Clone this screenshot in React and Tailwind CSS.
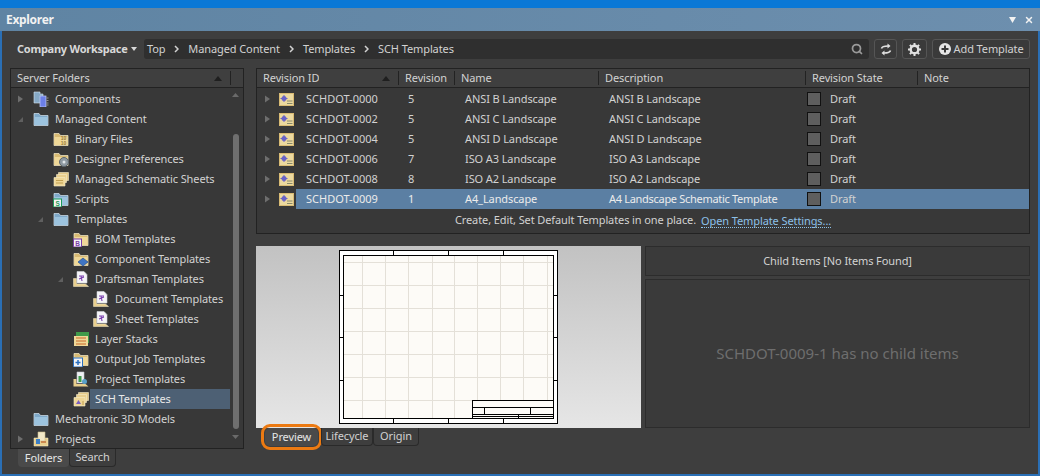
import { Search, X } from 'lucide-react'

const Folder = ({ tone = 'yellow', children }) => {
  const back = tone === 'blue' ? '#7fa9c9' : '#d9bb74'
  const front = tone === 'blue' ? '#9cc3de' : '#efd898'
  const edge = tone === 'blue' ? '#d5e4ef' : '#f7eccb'
  return (
    <svg width="16" height="16" viewBox="0 0 16 16" className="shrink-0">
      <path d="M1 2.5h5l1.5 2H15v10H1z" fill={back} stroke={edge} strokeWidth="0.7" />
      <path d="M1.5 6h13v8h-13z" fill={front} />
      {children}
    </svg>
  )
}

const Badge = ({ color, text }) => (
  <g>
    <rect x="0.5" y="8" width="8" height="8" fill="#f4f4f4" stroke={color} strokeWidth="1" />
    <text x="4.5" y="14.7" fontSize="6.5" fontWeight="700" textAnchor="middle" fill={color} fontFamily="Liberation Sans">{text}</text>
  </g>
)

const Doc = () => (
  <g>
    <path d="M4 0.5h7l3 3V12H4z" fill="#f5f5f8" stroke="#cfd0d8" strokeWidth="0.6" />
    <path d="M6 5h5M8 5l1 5M6 8l5-2" stroke="#7a3fb0" strokeWidth="1.1" fill="none" />
  </g>
)

const Stack = () => (
  <g>
    <path d="M5.5 1.5h10v8h-10z" fill="#e5c987" stroke="#f7eccb" strokeWidth="0.6" />
    <path d="M3.5 3.5h10v8h-10z" fill="#e9cf8e" stroke="#f7eccb" strokeWidth="0.6" />
  </g>
)

const icons = {
  components: (
    <svg width="16" height="16" viewBox="0 0 16 16" className="shrink-0">
      <path d="M1 1h6v2h3v9H1z" fill="#86a9c6" stroke="#d5e4ef" strokeWidth="0.6" />
      <rect x="7" y="5" width="6" height="11" fill="#6c7fe8" stroke="#c4ccf5" strokeWidth="0.7" />
      <path d="M13.5 7h2M13.5 9.5h2M13.5 12h2M13.5 14h2" stroke="#aaa" strokeWidth="0.8" />
    </svg>
  ),
  blue: <Folder tone="blue" />,
  binary: (
    <Folder>
      <text x="10.5" y="9" fontSize="5" fontWeight="700" textAnchor="middle" fill="#9a7a36" fontFamily="Liberation Sans">10</text>
      <text x="10.5" y="14" fontSize="5" fontWeight="700" textAnchor="middle" fill="#9a7a36" fontFamily="Liberation Sans">10</text>
    </Folder>
  ),
  prefs: (
    <Folder>
      <circle cx="11" cy="11" r="4.5" fill="#8f9aa3" stroke="#5c656c" strokeWidth="1" />
      <circle cx="11" cy="11" r="1.5" fill="#dfe4e8" />
    </Folder>
  ),
  sheets: (
    <svg width="16" height="16" viewBox="0 0 16 16" className="shrink-0">
      <Stack />
      <path d="M1 6.500h11v8.500H1z" fill="#eed696" stroke="#f7eccb" strokeWidth="0.6" />
      <path d="M3 9.500h7M3 12h7" stroke="#b5923f" strokeWidth="0.8" />
    </svg>
  ),
  scripts: (
    <Folder tone="blue">
      <Badge color="#1d9a5b" text="S" />
    </Folder>
  ),
  bom: (
    <Folder>
      <Badge color="#7b3fa8" text="B" />
    </Folder>
  ),
  comp: (
    <Folder>
      <path d="M10 7l5 4-5 4-5-4z" fill="#3f75c4" stroke="#26508f" strokeWidth="0.7" />
    </Folder>
  ),
  draft: (
    <svg width="16" height="16" viewBox="0 0 16 16" className="shrink-0">
      <path d="M0.500 7.500h3v5.500h9l3 2.500H0.500z" fill="#e9cf8e" stroke="#f7eccb" strokeWidth="0.5" />
      <Doc />
    </svg>
  ),
  layers: (
    <svg width="16" height="16" viewBox="0 0 16 16" className="shrink-0">
      <rect x="3" y="1" width="13" height="11" fill="#3f9a4a" />
      <path d="M1 5h14v10H1z" fill="#efd898" />
      <path d="M3 7h10M3 10h10M3 13h10" stroke="#c8682a" strokeWidth="1.2" />
    </svg>
  ),
  output: (
    <Folder>
      <rect x="0.5" y="7" width="9" height="9" fill="#f4f4f4" stroke="#2a6fc0" strokeWidth="1" />
      <path d="M2.5 11.5h5M5 9v5" stroke="#2a6fc0" strokeWidth="1.5" />
    </Folder>
  ),
  project: (
    <svg width="16" height="16" viewBox="0 0 16 16" className="shrink-0">
      <path d="M0.500 8h3v5h9l3 2.500H0.500z" fill="#e9cf8e" />
      <path d="M4 1h7v11H4z" fill="#eef0f4" stroke="#c4c6cc" strokeWidth="0.6" />
      <rect x="5.5" y="5" width="3" height="6" fill="#3f9a4a" />
      <circle cx="11.5" cy="10.5" r="2.5" fill="#5aa0c8" />
    </svg>
  ),
  sch: (
    <svg width="16" height="16" viewBox="0 0 16 16" className="shrink-0">
      <Stack />
      <path d="M1 6.500h11v8.500H1z" fill="#eed696" stroke="#f7eccb" strokeWidth="0.6" />
      <path d="M3 13l2.500-4 2.500 4z" fill="#7a5fc0" />
      <path d="M9 11h2M9 13h2" stroke="#b5923f" strokeWidth="0.8" />
    </svg>
  ),
  projects: (
    <svg width="16" height="16" viewBox="0 0 16 16" className="shrink-0">
      <path d="M1 7h14v8H1z" fill="#e9cf8e" stroke="#f7eccb" strokeWidth="0.5" />
      <path d="M5 1h7v9H5z" fill="#f2e8c8" stroke="#c9b98a" strokeWidth="0.6" />
      <path d="M3 8h4v5H3z" fill="#3e7fc4" />
      <path d="M8 11h5" stroke="#c2703a" strokeWidth="1.5" />
    </svg>
  )
}

const Arrow = ({ open }) =>
  open ? (
    <svg width="7" height="7" viewBox="0 0 7 7" className="shrink-0"><path d="M6 1v5H1z" fill="#5f5f5f" /></svg>
  ) : (
    <svg width="7" height="8" viewBox="0 0 7 8" className="shrink-0"><path d="M1 0.5l5 3.5-5 3.5z" fill="#6e6e6e" /></svg>
  )

const Chevron = () => (
  <svg width="5" height="8" viewBox="0 0 5 8" className="shrink-0"><path d="M1 1l3 3-3 3" fill="none" stroke="#d2d2d2" strokeWidth="1.5" /></svg>
)

const tree = [
  { label: 'Components', icon: 'components', level: 'pl-[22px]', arrow: 'closed' },
  { label: 'Managed Content', icon: 'blue', level: 'pl-[22px]', arrow: 'open' },
  { label: 'Binary Files', icon: 'binary', level: 'pl-[42px]' },
  { label: 'Designer Preferences', icon: 'prefs', level: 'pl-[42px]' },
  { label: 'Managed Schematic Sheets', icon: 'sheets', level: 'pl-[42px]' },
  { label: 'Scripts', icon: 'scripts', level: 'pl-[42px]' },
  { label: 'Templates', icon: 'blue', level: 'pl-[42px]', arrow: 'open' },
  { label: 'BOM Templates', icon: 'bom', level: 'pl-[62px]' },
  { label: 'Component Templates', icon: 'comp', level: 'pl-[62px]' },
  { label: 'Draftsman Templates', icon: 'draft', level: 'pl-[62px]', arrow: 'open' },
  { label: 'Document Templates', icon: 'draft', level: 'pl-[82px]' },
  { label: 'Sheet Templates', icon: 'draft', level: 'pl-[82px]' },
  { label: 'Layer Stacks', icon: 'layers', level: 'pl-[62px]' },
  { label: 'Output Job Templates', icon: 'output', level: 'pl-[62px]' },
  { label: 'Project Templates', icon: 'project', level: 'pl-[62px]' },
  { label: 'SCH Templates', icon: 'sch', level: 'pl-[62px]', selected: true },
  { label: 'Mechatronic 3D Models', icon: 'blue', level: 'pl-[22px]' },
  { label: 'Projects', icon: 'projects', level: 'pl-[22px]', arrow: 'closed' }
]

const rows = [
  ['SCHDOT-0000', '5', 'ANSI B Landscape', 'ANSI B Landscape'],
  ['SCHDOT-0002', '5', 'ANSI C Landscape', 'ANSI C Landscape'],
  ['SCHDOT-0004', '5', 'ANSI D Landscape', 'ANSI D Landscape'],
  ['SCHDOT-0006', '7', 'ISO A3 Landscape', 'ISO A3 Landscape'],
  ['SCHDOT-0008', '8', 'ISO A2 Landscape', 'ISO A2 Landscape'],
  ['SCHDOT-0009', '1', 'A4_Landscape', 'A4 Landscape Schematic Template']
]

const TemplateIcon = () => (
  <svg width="15" height="13" viewBox="0 0 15 13" className="shrink-0">
    <rect x="0.5" y="0.5" width="14" height="12" fill="#ecd9a0" stroke="#d9bb74" />
    <circle cx="5" cy="5.500" r="2.500" fill="#6a63c8" />
    <path d="M5 2v7M1.500 5.500h7" stroke="#6a63c8" strokeWidth="1" />
    <path d="M8 8h5.500M8 10.500h5.500" stroke="#8a8a6a" strokeWidth="1" />
  </svg>
)

const Sep = () => <span className="w-px h-[14px] bg-[#222222] shrink-0" />

const Head = ({ label, sort, className = '' }) => (
  <div className={'flex items-center justify-between ' + className}>
    <span className="pl-[6px] truncate">{label}</span>
    <span className="flex items-center gap-[8px]">
      {sort && <svg width="8" height="5" viewBox="0 0 8 5"><path d="M4 0l4 5H0z" fill="#1f1f1f" /></svg>}
      <Sep />
    </span>
  </div>
)

const verticals = [362, 385, 408, 432, 454, 477, 500, 523, 547]
const horizontals = [262, 285, 308, 331, 354, 377, 400]

const SheetDrawing = () => (
  <svg width="220" height="175" viewBox="339 250 220 175" className="ml-[83px] mt-[4px]" shapeRendering="crispEdges">
    <rect x="339.5" y="250.5" width="218" height="173" fill="#ffffff" stroke="#000" />
    <rect x="343.5" y="255.5" width="210" height="163" fill="#fdfbf7" stroke="#000" />
    {verticals.map(x => <path key={x} d={'M' + x + ' 256V418'} stroke="#e4e0d8" />)}
    {horizontals.map(y => <path key={y} d={'M344 ' + y + 'H553'} stroke="#e4e0d8" />)}
    <path d="M393.5 250v5M448.5 250v5M503.5 250v5M393.5 419v4M448.5 419v4M503.5 419v4" stroke="#000" />
    <path d="M339 295.5h4M339 337.5h4M339 380.5h4M554 295.5h4M554 337.5h4M554 380.5h4" stroke="#000" />
    <rect x="472.5" y="400.5" width="81" height="18" fill="#fdfbf7" stroke="#000" />
    <path d="M472 407.5h81M472 414.5h81M472 416.5h81M484.5 407v7M530.5 407v7M518.5 414v4" stroke="#000" />
  </svg>
)

function App() {
  return (
    <div className="w-[1040px] h-[476px] flex flex-col overflow-hidden bg-[#2a6fb5] font-['Noto_Sans',sans-serif] text-[11px] tracking-[-0.1px] text-[#d2d2d2]">
      <div className="h-[8px] bg-[#0a78d6] shrink-0" />
      <div className="h-[23px] shrink-0 flex items-center justify-between pl-[6px] pr-[6px] bg-gradient-to-r from-[#5f84a3] to-[#6d8fae]">
        <span className="font-bold text-[12px] tracking-[-0.3px] text-[#f2f2f2]">Explorer</span>
        <div className="flex items-center gap-[8px]">
          <svg width="7" height="6" viewBox="0 0 7 6"><path d="M0 0h7L3.5 6z" fill="#f2f2f2" /></svg>
          <X size={10} strokeWidth={3.5} className="text-[#f2f2f2]" />
        </div>
      </div>

      <div className="flex-1 min-h-0 ml-[2px] mr-[2px] mb-[2px] bg-[#3e3e3e] flex flex-col">
        {/* toolbar */}
        <div className="h-[20px] mt-[8px] shrink-0 flex items-center pl-[15px] pr-[8px]">
          <span className="font-bold w-[111px] tracking-[-0.25px] whitespace-nowrap text-[#d8d8d8]">Company Workspace</span>
          <svg width="6" height="4" viewBox="0 0 6 4" className="ml-[3px]"><path d="M0 0h6L3 4z" fill="#d8d8d8" /></svg>
          <div className="ml-[7px] w-[726px] h-[20px] rounded-[3px] bg-[#2f2f2f] flex items-center justify-between pl-[3px] pr-[6px]">
            <div className="flex items-center gap-[9px]">
              <span>Top</span><Chevron />
              <span>Managed Content</span><Chevron />
              <span>Templates</span><Chevron />
              <span>SCH Templates</span>
            </div>
            <Search size={12} strokeWidth={3.5} className="text-[#9a9a9a]" />
          </div>
          <button className="ml-[5px] w-[23px] h-[20px] rounded-[3px] border border-[#555555] bg-[#3a3a3a] flex items-center justify-center">
            <svg width="12" height="13" viewBox="0 0 12 13" fill="none" stroke="#e0e0e0" strokeWidth="1.6">
              <path d="M1.500 5.500C2 3.500 4 3 8 3" />
              <path d="M7.500 0.500L10.500 3 7.500 5.500z" fill="#e0e0e0" stroke="none" />
              <path d="M10.500 7.500C10 9.500 8 10 4 10" />
              <path d="M4.500 7.500L1.500 10 4.500 12.500z" fill="#e0e0e0" stroke="none" />
            </svg>
          </button>
          <button className="ml-[5px] w-[25px] h-[20px] rounded-[3px] border border-[#555555] bg-[#3a3a3a] flex items-center justify-center">
            <svg width="13" height="13" viewBox="0 0 13 13">
              <circle cx="6.5" cy="6.5" r="3.8" fill="none" stroke="#e0e0e0" strokeWidth="2.4" />
              <path d="M6.5 0v2.5M6.5 10.5V13M0 6.5h2.5M10.5 6.5H13M1.9 1.9l1.8 1.8M9.3 9.3l1.8 1.8M1.9 11.1l1.8-1.8M9.3 3.7l1.8-1.8" stroke="#e0e0e0" strokeWidth="2" />
            </svg>
          </button>
          <button className="ml-[5px] w-[98px] h-[20px] rounded-[3px] border border-[#555555] bg-[#3a3a3a] flex items-center justify-center gap-[3px] whitespace-nowrap">
            <svg width="12" height="12" viewBox="0 0 12 12"><circle cx="6" cy="6" r="6" fill="#e6e6e6" /><path d="M6 2.5v7M2.5 6h7" stroke="#3a3a3a" strokeWidth="2" /></svg>
            Add Template
          </button>
        </div>

        <div className="flex-1 min-h-0 flex gap-[12px] mt-[9px] pl-[8px] pr-[8px]">
          {/* left column */}
          <div className="w-[234px] shrink-0 flex flex-col">
            <div className="h-[381px] border border-[#222222] bg-[#383838] flex flex-col">
              <div className="h-[19px] shrink-0 flex items-center border-b border-[#222222] bg-[#3f3f3f]">
                <Head label="Server Folders" sort className="w-[220px]" />
              </div>
              <div className="flex-1 min-h-0 flex">
                <div className="flex-1 pt-[1px] min-w-0">
                  {tree.map(item => (
                    <div key={item.label} className={'relative h-[20px] flex items-center gap-[6px] ' + item.level}>
                      {item.arrow && (
                        <span className="absolute flex ml-[-16px]">
                          <Arrow open={item.arrow === 'open'} />
                        </span>
                      )}
                      {icons[item.icon]}
                      <span className={item.selected ? 'flex-1 h-[20px] flex items-center bg-[#4d6074] text-[#e8e8e8] ml-[-5px] pl-[5px] whitespace-nowrap' : 'whitespace-nowrap'}>{item.label}</span>
                    </div>
                  ))}
                </div>
                <div className="w-[13px] shrink-0 flex flex-col items-center pt-[5px] pb-[2px] pr-[2px]">
                  <svg width="7" height="4" viewBox="0 0 7 4"><path d="M3.5 0L7 4H0z" fill="#6a6a6a" /></svg>
                  <div className="w-[6px] h-[295px] mt-[37px] rounded-[3px] bg-[#6f6f6f]" />
                  <svg width="7" height="4" viewBox="0 0 7 4" className="mt-[6px]"><path d="M0 0h7L3.5 4z" fill="#6a6a6a" /></svg>
                </div>
              </div>
            </div>
            <div className="flex pl-[8px]">
              <div className="h-[18px] w-[51px] flex items-center justify-center rounded-b-[4px] bg-[#4a4a4a] text-[#e6e6e6]">Folders</div>
              <div className="h-[18px] w-[47px] flex items-center justify-center rounded-b-[4px] border border-t-0 border-[#2a2a2a]">Search</div>
            </div>
          </div>

          {/* right column */}
          <div className="flex-1 min-w-0 flex flex-col">
            <div className="h-[166px] shrink-0 border border-[#222222] bg-[#383838] flex flex-col">
              <div className="h-[19px] shrink-0 grid grid-cols-[142px_56px_144px_207px_112px_1fr] items-center border-b border-[#222222] bg-[#3f3f3f]">
                <Head label="Revision ID" sort />
                <Head label="Revision" />
                <Head label="Name" />
                <Head label="Description" />
                <Head label="Revision State" />
                <div className="pl-[6px]">Note</div>
              </div>
              <div className="pt-[1px]">
                {rows.map((row, i) => {
                  const selected = i === rows.length - 1
                  return (
                    <div key={row[0]} className="h-[20px] flex items-center">
                      <div className="w-[39px] shrink-0 flex items-center gap-[8px] pl-[7px]">
                        <Arrow />
                        <TemplateIcon />
                      </div>
                      <div className={'flex-1 h-[20px] grid grid-cols-[103px_56px_144px_207px_1fr] items-center ' + (selected ? 'bg-[#5b7fa3] text-[#ececec]' : '')}>
                        <span className="pl-[10px] tracking-normal">{row[0]}</span>
                        <span className="pl-[9px]">{row[1]}</span>
                        <span className="pl-[10px] whitespace-nowrap">{row[2]}</span>
                        <span className={'pl-[10px] whitespace-nowrap ' + (selected ? 'tracking-[-0.3px]' : '')}>{row[3]}</span>
                        <span className="flex items-center gap-[9px] pl-[1px] text-[#d2d2d2]">
                          <span className="w-[14px] h-[14px] border border-[#111111] bg-[#5e5e5e]" />
                          Draft
                        </span>
                      </div>
                    </div>
                  )
                })}
              </div>
              <div className="flex-1 flex items-center justify-center gap-[5px] pb-[1px]">
                Create, Edit, Set Default Templates in one place.
                <span className="text-[#8cc0e8] border-b border-dotted border-[#8cc0e8] leading-[13px]">Open Template Settings...</span>
              </div>
            </div>

            <div className="flex gap-[4px] mt-[12px]">
              <div className="w-[385px] h-[182px] shrink-0 bg-gradient-to-b from-[#c2c2c2] to-[#e6e6e6] flex items-start">
                <SheetDrawing />
              </div>
              <div className="flex-1 flex flex-col gap-[3px]">
                <div className="h-[30px] border border-[#2c2c2c] bg-[#3a3a3a] flex items-center justify-center">Child Items [No Items Found]</div>
                <div className="flex-1 border border-[#2c2c2c] bg-[#3a3a3a] flex items-center justify-center text-[15px] tracking-normal text-[#6e6e6e]">SCHDOT-0009-1 has no child items</div>
              </div>
            </div>

            <div className="flex items-center pl-[9px]">
              <div className="h-[18px] w-[53px] flex items-center justify-center rounded-[5px] bg-[#4a4a4a] text-[#e6e6e6] outline-[3px] outline-solid outline-[#ec7a12] outline-offset-[1px]">Preview</div>
              <div className="ml-[3px] h-[18px] w-[52px] flex items-center justify-center rounded-b-[4px] border border-t-0 border-[#2a2a2a]">Lifecycle</div>
              <div className="h-[18px] w-[46px] flex items-center justify-center rounded-b-[4px] border border-t-0 border-[#2a2a2a]">Origin</div>
            </div>
          </div>
        </div>
      </div>
    </div>
  )
}

export default App
